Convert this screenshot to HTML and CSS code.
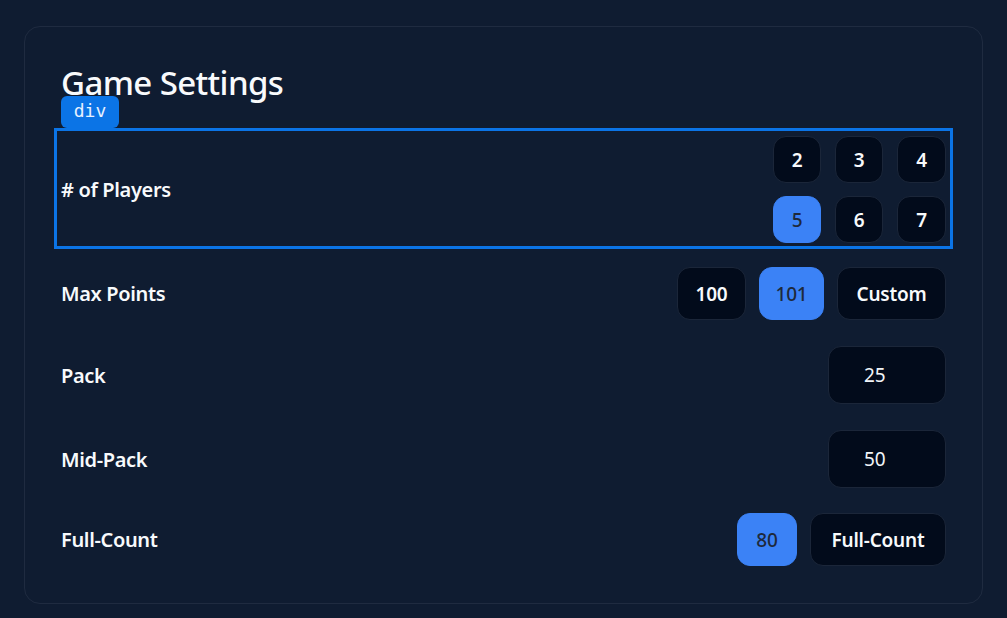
FILE: index.html
```html
<!DOCTYPE html>
<html>
<head>
<meta charset="utf-8">
<link rel="stylesheet" href="styles.css">
</head>
<body>
<div class="page">
  <section class="card">
    <h1 class="title">Game Settings</h1>
    <div class="rows">
      <div class="row row-players">
        <span class="label">Players</span>
        <div class="grid">
          <button class="opt sq">2</button>
          <button class="opt sq">3</button>
          <button class="opt sq">4</button>
          <button class="opt sq active">5</button>
          <button class="opt sq">6</button>
          <button class="opt sq">7</button>
        </div>
        <span class="inspect"></span>
        <span class="badge">div</span>
      </div>
      <div class="row row-max">
        <span class="label">Max Points</span>
        <div class="group">
          <button class="opt w100">100</button>
          <button class="opt w101 active">101</button>
          <button class="opt wcustom">Custom</button>
        </div>
      </div>
      <div class="row row-input">
        <span class="label">Pack</span>
        <div class="field">25</div>
      </div>
      <div class="row row-input">
        <span class="label">Mid-Pack</span>
        <div class="field">50</div>
      </div>
      <div class="row row-full">
        <span class="label">Full-Count</span>
        <div class="group">
          <button class="opt w80 active">80</button>
          <button class="opt wfull">Full-Count</button>
        </div>
      </div>
    </div>
  </section>
</div>
</body>
</html>
```

FILE: styles.css
```css
* { box-sizing: border-box; }
html, body { margin: 0; padding: 0; }
body {
  background: #0f1c31;
  font-family: "Noto Sans", "Open Sans", sans-serif;
  color: #f1f5f9;
  width: 1007px;
  height: 618px;
  overflow: hidden;
}
.page {
  padding: 26px 24px 14px 24px;
}
.card {
  border: 1px solid #1f2b40;
  border-radius: 16px;
  padding: 30px 36px 36px 36px;
  height: 578px;
}
.title {
  margin: 0;
  font-size: 33px;
  font-weight: 500;
  line-height: 52px;
  letter-spacing: -0.6px;
  color: #f8fafc;
}
.rows {
  margin-top: 27px;
  display: flex;
  flex-direction: column;
}
.row {
  position: relative;
  display: flex;
  align-items: center;
  justify-content: space-between;
}
.label {
  font-size: 20px;
  font-weight: 600;
  letter-spacing: -0.35px;
  color: #f8fafc;
}
.row-players .label::before { content: "# of "; }
.grid {
  display: grid;
  grid-template-columns: 48px 48px 49px;
  grid-auto-rows: 47px;
  column-gap: 14px;
  row-gap: 13px;
}
.group {
  display: flex;
  gap: 13px;
}
.opt {
  font-family: inherit;
  font-size: 19px;
  font-weight: 600;
  letter-spacing: -0.2px;
  color: #f8fafc;
  background: #020b1b;
  border: 1px solid #1b2639;
  border-radius: 13px;
  padding: 0;
  display: flex;
  align-items: center;
  justify-content: center;
}
.opt.active {
  background: #3b82f6;
  border-color: #3b82f6;
  color: #1e293b;
  font-weight: 500;
}
.row-max { margin-top: 24px; }
.row-max .opt { height: 53px; }
.w100 { width: 69px; }
.w101 { width: 65px; }
.wcustom { width: 109px; }
.row-input { margin-top: 26px; }
.field {
  width: 118px;
  height: 58px;
  background: #020b1b;
  border: 1px solid #1b2639;
  border-radius: 13px;
  font-size: 19px;
  color: #f1f5f9;
  display: flex;
  align-items: center;
  padding-left: 35px;
}
.row-full { margin-top: 25px; }
.row-full .opt { height: 53px; }
.w80 { width: 60px; }
.wfull { width: 136px; }
.inspect {
  position: absolute;
  top: -8px;
  bottom: -6px;
  left: -7px;
  right: -7px;
  border: 3px solid #0b74e6;
  pointer-events: none;
}
.badge {
  position: absolute;
  left: 0;
  top: -40px;
  width: 58px;
  height: 32px;
  background: #0b74e6;
  border-radius: 6px;
  color: #e6f0ff;
  font-family: "DejaVu Sans Mono", "Liberation Mono", monospace;
  font-size: 18px;
  font-weight: 400;
  display: flex;
  align-items: center;
  justify-content: center;
  padding-bottom: 3px;
}
```
